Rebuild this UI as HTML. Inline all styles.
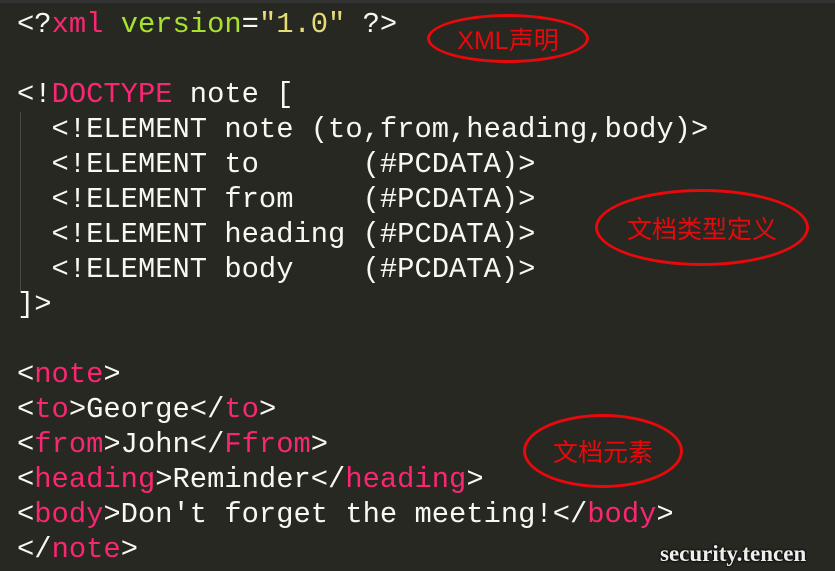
<!DOCTYPE html>
<html><head><meta charset="utf-8"><style>
body{margin:0;width:835px;height:571px;background:#272822;overflow:hidden;position:relative}
.code{position:absolute;left:17px;top:7px;font-family:"Liberation Mono",monospace;font-size:28.8px;line-height:35px;color:#f8f8f2;white-space:pre;letter-spacing:0}
.p{color:#f92672}.g{color:#a6e22e}.y{color:#e6db74}
.guide{position:absolute;left:20px;top:112px;width:1px;height:180px;background:#4a4a44}
.el{position:absolute;border:3px solid #e8090c;border-radius:50%;box-sizing:border-box;color:#e8090c;font-family:"Liberation Sans","Noto Sans CJK SC",sans-serif;font-size:25px;display:flex;align-items:center;justify-content:center}
.wm{position:absolute;left:660px;top:541px;font-family:"Liberation Serif",serif;font-size:23px;font-weight:bold;color:#eee;text-shadow:0 0 2px #000,0 0 2px #000;white-space:nowrap}
.top{position:absolute;left:0;top:0;width:835px;height:3px;background:#333}
</style></head><body>
<div class="top"></div>
<div class="guide"></div>
<div class="code">&lt;?<span class="p">xml</span> <span class="g">version</span>=<span class="y">"1.0"</span> ?&gt;

&lt;!<span class="p">DOCTYPE</span> note [
  &lt;!ELEMENT note (to,from,heading,body)&gt;
  &lt;!ELEMENT to      (#PCDATA)&gt;
  &lt;!ELEMENT from    (#PCDATA)&gt;
  &lt;!ELEMENT heading (#PCDATA)&gt;
  &lt;!ELEMENT body    (#PCDATA)&gt;
]&gt;

&lt;<span class="p">note</span>&gt;
&lt;<span class="p">to</span>&gt;George&lt;/<span class="p">to</span>&gt;
&lt;<span class="p">from</span>&gt;John&lt;/<span class="p">Ffrom</span>&gt;
&lt;<span class="p">heading</span>&gt;Reminder&lt;/<span class="p">heading</span>&gt;
&lt;<span class="p">body</span>&gt;Don't forget the meeting!&lt;/<span class="p">body</span>&gt;
&lt;/<span class="p">note</span>&gt;</div>
<div class="el" style="left:427px;top:14px;width:162px;height:49px">XML声明</div>
<div class="el" style="left:595px;top:189px;width:214px;height:77px">文档类型定义</div>
<div class="el" style="left:523px;top:414px;width:160px;height:74px">文档元素</div>
<div class="wm">security.tencen</div>
</body></html>
